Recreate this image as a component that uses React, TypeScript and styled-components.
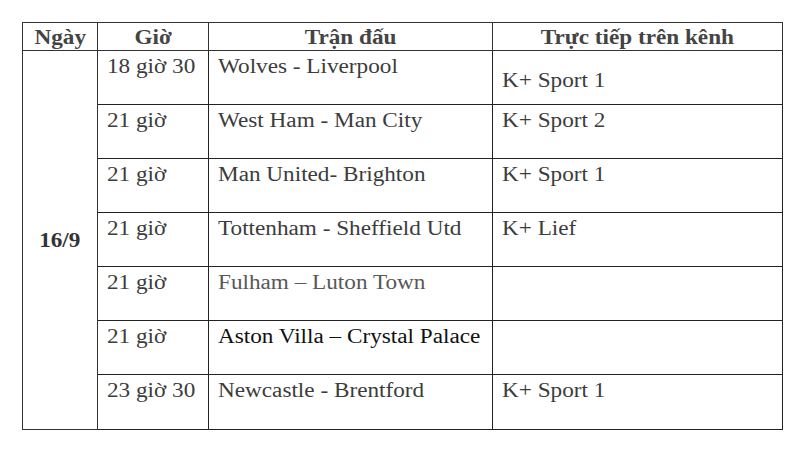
import React from "react";
import styled, { createGlobalStyle } from "styled-components";

const GlobalStyle = createGlobalStyle`
  html, body {
    margin: 0;
    padding: 0;
    background: #fff;
  }
  body {
    font-family: "Liberation Serif", "Times New Roman", serif;
  }
`;

interface Match {
  time: string;
  teams: string;
  channel: string;
  tone?: "normal" | "light" | "dark";
  lowChannel?: boolean;
}

const matches: Match[] = [
  { time: "18 giờ 30", teams: "Wolves - Liverpool", channel: "K+ Sport 1", lowChannel: true },
  { time: "21 giờ", teams: "West Ham - Man City", channel: "K+ Sport 2" },
  { time: "21 giờ", teams: "Man United- Brighton", channel: "K+ Sport 1" },
  { time: "21 giờ", teams: "Tottenham - Sheffield Utd", channel: "K+ Lief" },
  { time: "21 giờ", teams: "Fulham – Luton Town", channel: "", tone: "light" },
  { time: "21 giờ", teams: "Aston Villa – Crystal Palace", channel: "", tone: "dark" },
  { time: "23 giờ 30", teams: "Newcastle - Brentford", channel: "K+ Sport 1" },
];

const App = () => {
  return (
    <>
      <GlobalStyle />
      <Page>
        <Schedule>
          <colgroup>
            <col style={{ width: 75 }} />
            <col style={{ width: 111 }} />
            <col style={{ width: 284 }} />
            <col style={{ width: 290 }} />
          </colgroup>
          <thead>
            <tr>
              <HeadCell><Text $center>Ngày</Text></HeadCell>
              <HeadCell><Text $center>Giờ</Text></HeadCell>
              <HeadCell><Text $center>Trận đấu</Text></HeadCell>
              <HeadCell><Text $center>Trực tiếp trên kênh</Text></HeadCell>
            </tr>
          </thead>
          <tbody>
            {matches.map((m, i) => (
              <Row key={i} $last={i === matches.length - 1}>
                {i === 0 && (
                  <DateCell rowSpan={matches.length}>
                    <Text $center>16/9</Text>
                  </DateCell>
                )}
                <Cell>
                  <Text>{m.time}</Text>
                </Cell>
                <Cell $tone={m.tone}>
                  <Text>{m.teams}</Text>
                </Cell>
                <Cell $low={m.lowChannel}>
                  <Text>{m.channel}</Text>
                </Cell>
              </Row>
            ))}
          </tbody>
        </Schedule>
      </Page>
    </>
  );
};

export default App;

const Page = styled.div`
  padding: 22px 0 0 22px;
  width: 800px;
  height: 454px;
  box-sizing: border-box;
`;

const Schedule = styled.table`
  border-collapse: collapse;
  table-layout: fixed;
  width: 760px;
  border: 1px solid #333;
  color: #3c3c3c;
  font-size: 20px;
  line-height: 24px;
`;

const Text = styled.span<{ $center?: boolean }>`
  display: inline-block;
  white-space: nowrap;
  transform: scaleX(1.16);
  transform-origin: ${(p) => (p.$center ? "center" : "left")};
`;

const HeadCell = styled.th`
  height: 28px;
  padding: 2px 0 0;
  box-sizing: border-box;
  vertical-align: top;
  text-align: center;
  font-weight: bold;
  color: #444;
  border: 1px solid #333;
`;

const Row = styled.tr<{ $last?: boolean }>`
  height: ${(p) => (p.$last ? "55px" : "54px")};
`;

const DateCell = styled.td`
  text-align: center;
  vertical-align: middle;
  font-weight: bold;
  color: #333;
  padding: 0;
  border: 1px solid #333;
`;

const Cell = styled.td<{ $tone?: "normal" | "light" | "dark"; $low?: boolean }>`
  vertical-align: top;
  padding: ${(p) => (p.$low ? "17px" : "3px")} 9px 0;
  border: 1px solid #222;
  color: ${(p) =>
    p.$tone === "light" ? "#585858" : p.$tone === "dark" ? "#111" : "#3c3c3c"};
`;
